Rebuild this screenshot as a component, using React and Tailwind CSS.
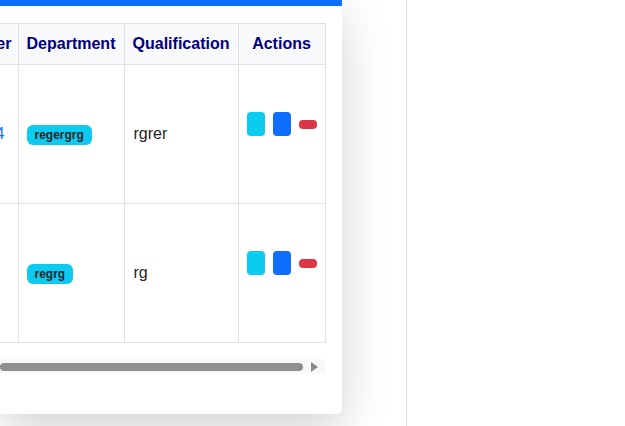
import React from "react";

const rows = [
  { phone: "9876543214", dept: "regergrg", qual: "rgrer" },
  { phone: "", dept: "regrg", qual: "rg" },
];

function Actions() {
  return (
    <div className="flex items-center gap-[8px]">
      <span className="block w-[18px] h-[24px] rounded-[4px] bg-[#0dcaf0]" />
      <span className="block w-[18px] h-[24px] rounded-[4px] bg-[#0d6efd]" />
      <span className="block w-[18px] h-[9px] rounded-[4px] bg-[#dc3545]" />
    </div>
  );
}

export default function App() {
  return (
    <div
      className="flex w-[625px] h-[426px] bg-white overflow-hidden"
      style={{ fontFamily: '"Liberation Sans", Arial, sans-serif' }}
    >
      <div className="w-[406px] shrink-0 h-full">
        <div className="w-[342px] bg-white rounded-br-[6px] shadow-[0_16px_48px_rgba(0,0,0,0.175)] overflow-hidden">
          <div className="h-[6px] bg-[#0d6efd]" />
          <div className="pt-[17px] pr-[17px] pb-[40px]">
            <table className="table-fixed border-collapse w-[325px] text-[16px] text-[#212529]">
              <colgroup>
                <col className="w-[18px]" />
                <col className="w-[106px]" />
                <col className="w-[114px]" />
                <col className="w-[87px]" />
              </colgroup>
              <thead>
                <tr className="h-[41px] bg-[#f8f9fa]">
                  <th className="border-y border-r border-[#dee2e6] p-0 font-bold text-[#000080]">
                    <div className="flex justify-end overflow-hidden whitespace-nowrap pr-[6px] leading-[24px]">
                      Phone Number
                    </div>
                  </th>
                  <th className="border border-[#dee2e6] px-[8px] font-bold text-[#000080] text-center leading-[24px] whitespace-nowrap">
                    Department
                  </th>
                  <th className="border border-[#dee2e6] px-[8px] font-bold text-[#000080] text-center leading-[24px] whitespace-nowrap">
                    Qualification
                  </th>
                  <th className="border border-[#dee2e6] px-[8px] font-bold text-[#000080] text-center leading-[24px] whitespace-nowrap">
                    Actions
                  </th>
                </tr>
              </thead>
              <tbody>
                {rows.map((r, i) => (
                  <tr key={i} className="h-[139px]">
                    <td className="border-y border-r border-[#dee2e6] p-0 align-middle">
                      <div className="flex justify-end overflow-hidden whitespace-nowrap pr-[13px] leading-[24px] text-[#0d6efd]">
                        {r.phone}
                      </div>
                    </td>
                    <td className="border border-[#dee2e6] px-[8px] align-middle">
                      <span className="inline-block rounded-[6px] bg-[#0dcaf0] px-[8px] py-[4px] text-[12px] font-bold leading-[12px] text-[#212529] mt-[2px]">
                        {r.dept}
                      </span>
                    </td>
                    <td className="border border-[#dee2e6] pl-[9px] pr-[8px] align-middle leading-[24px]">
                      {r.qual}
                    </td>
                    <td className="border border-[#dee2e6] px-[8px] pt-[47px] align-top">
                      <Actions />
                    </td>
                  </tr>
                ))}
              </tbody>
            </table>
            <div className="mt-[16px] h-[15px] w-[325px] bg-[#f8f8f8] flex items-center">
              <div className="h-[8px] w-[303px] rounded-full bg-[#8f8f8f]" />
              <div className="ml-[8px] w-0 h-0 border-y-[5px] border-y-transparent border-l-[7px] border-l-[#8a8a8a]" />
            </div>
          </div>
        </div>
      </div>
      <div className="flex-1 h-full border-l border-[#dadada] bg-white" />
    </div>
  );
}
